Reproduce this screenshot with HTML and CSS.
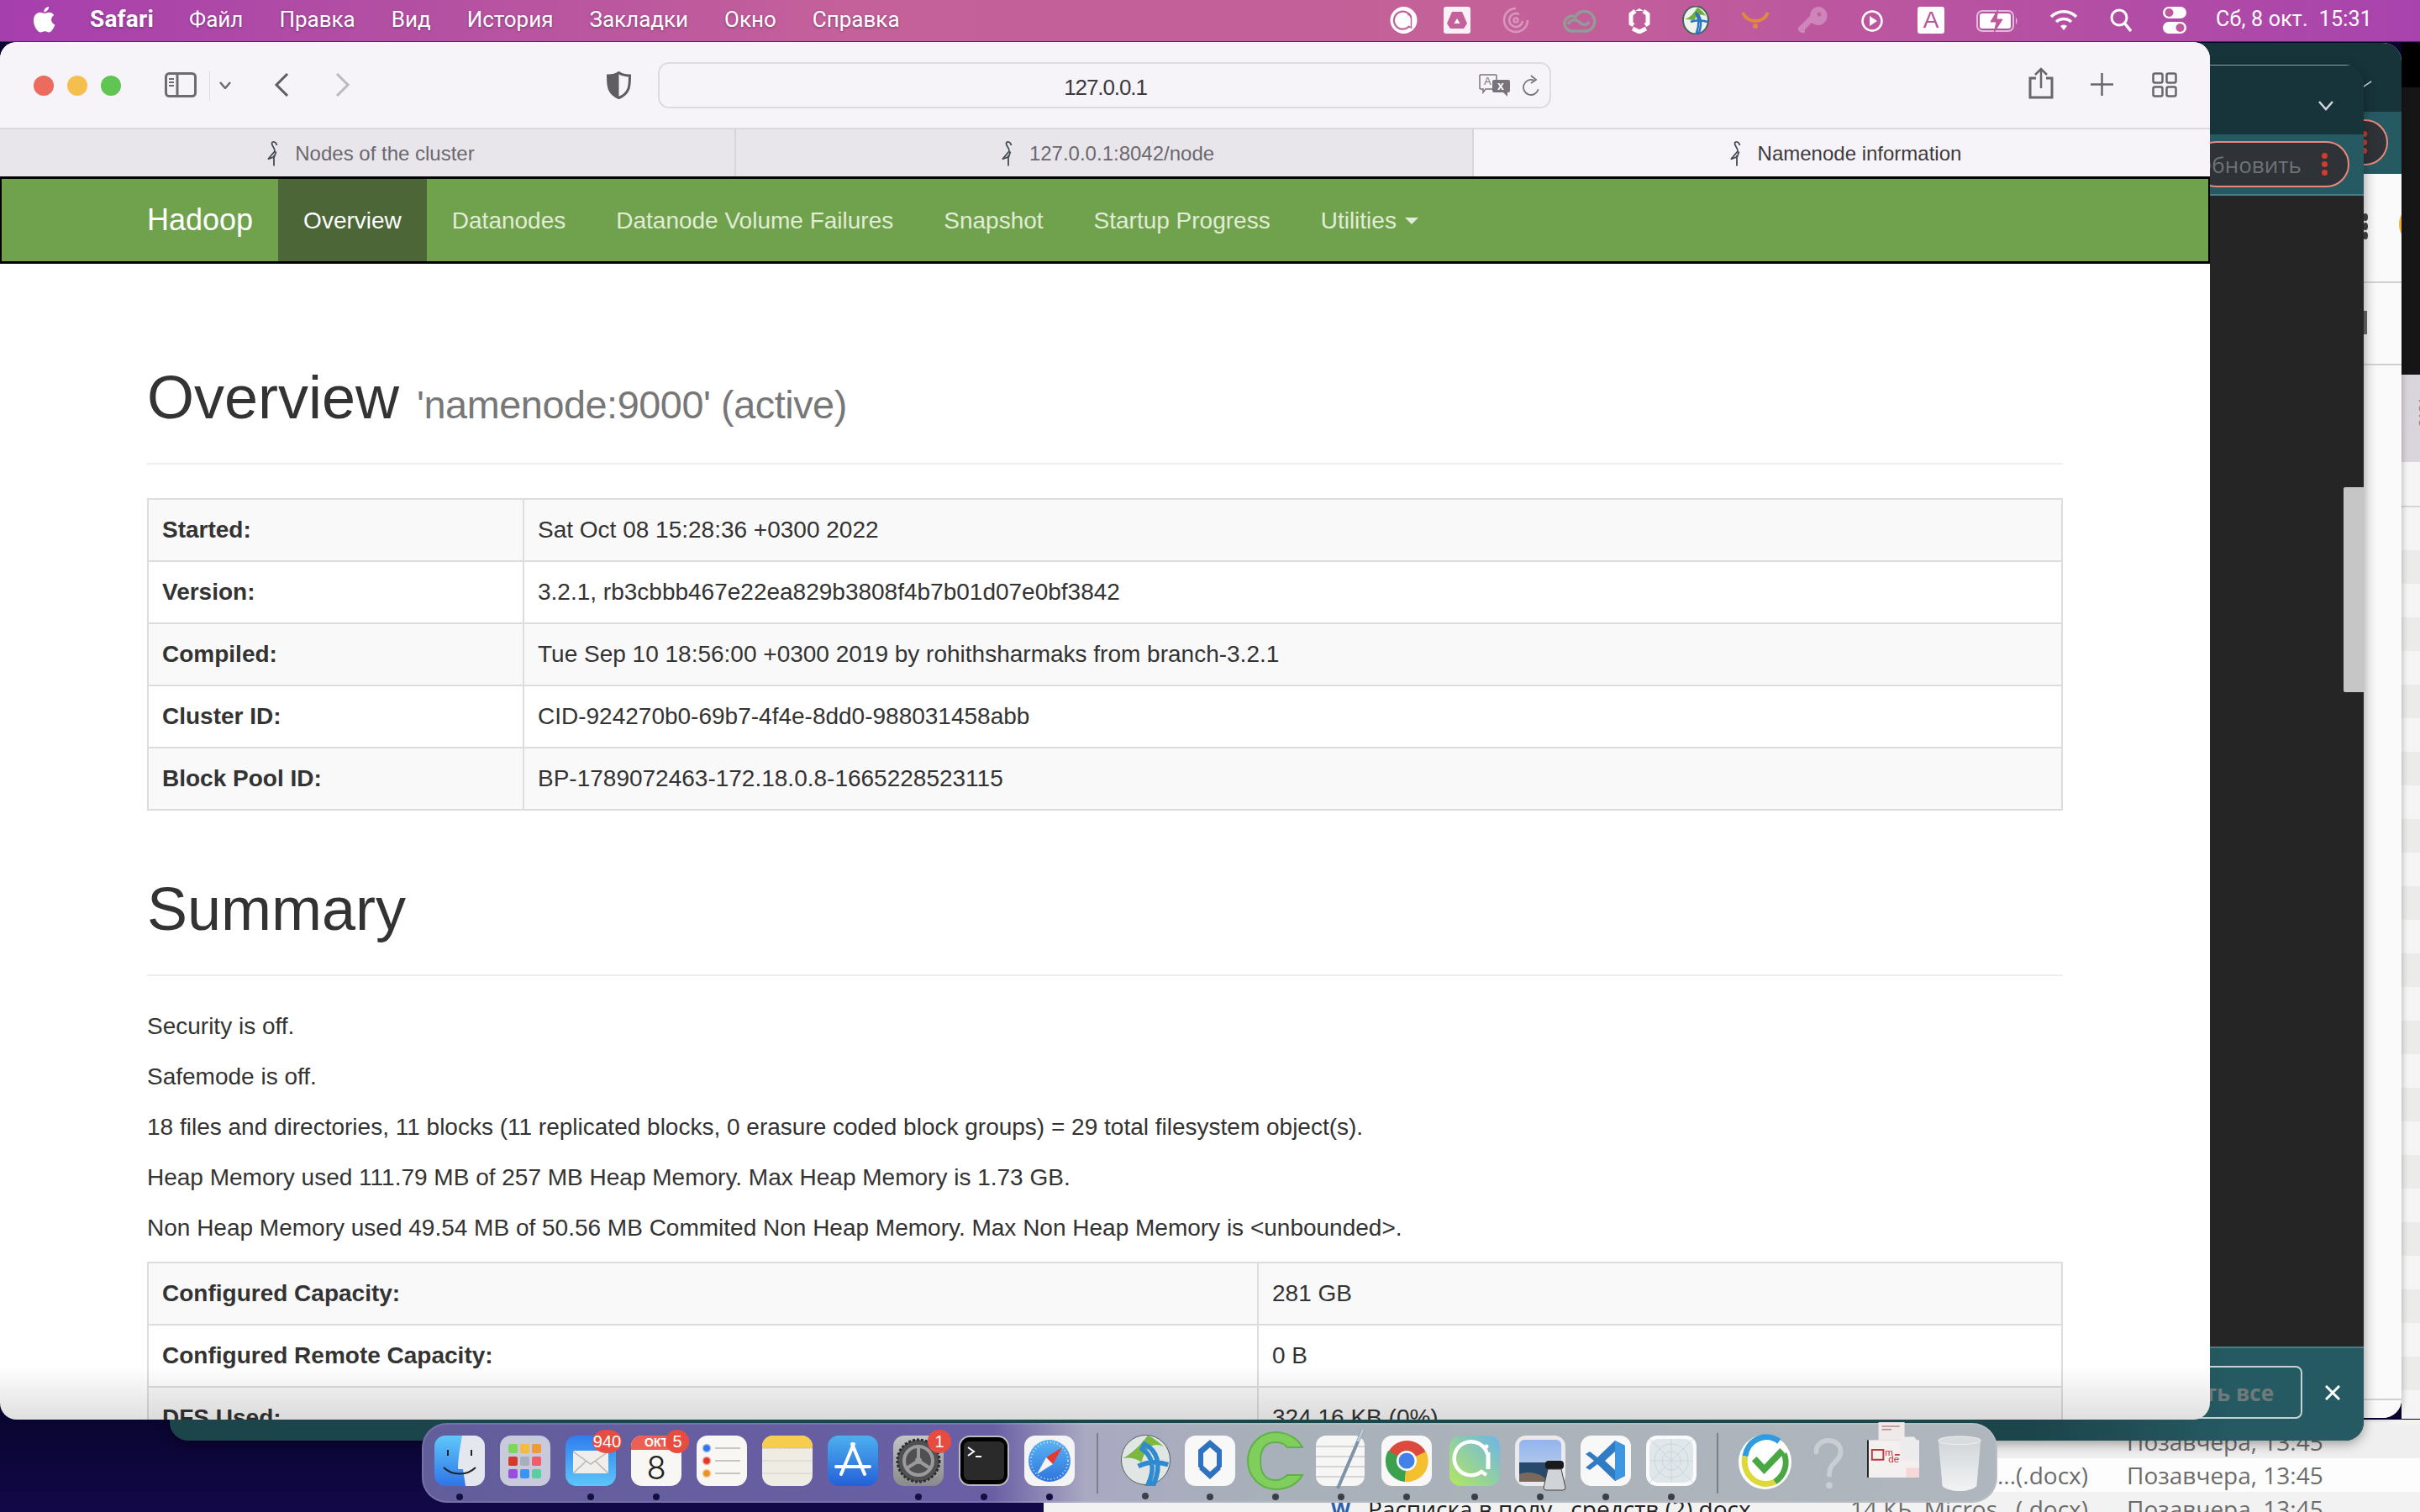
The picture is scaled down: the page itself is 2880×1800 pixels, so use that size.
FILE: index.html
```html
<!DOCTYPE html>
<html lang="ru">
<head>
<meta charset="utf-8">
<title>Namenode information</title>
<link rel="stylesheet" href="styles.css">
</head>
<body>
<svg class="defs" width="0" height="0">
  <symbol id="bird" viewBox="0 0 16 32"><path d="M12.500 7C11.500 2.500 6.500 1.500 6.500 5c0 3 4 5 3.500 9L2 23.500l7.500-3 2-6M9 19v12.500" fill="none" stroke="#414c54" stroke-width="1.800"/></symbol>
</svg>
<div class="desktop">

  <div class="win win-finder">
    <div class="finder-row f1"><span class="f-name">ент</span><span class="f-date">Позавчера, 13:45</span></div>
    <div class="finder-row f2"><span class="f-name">...(.docx)</span><span class="f-date">Позавчера, 13:45</span></div>
    <div class="finder-row f3"><span class="f-w">W</span><span class="f-main">Расписка в полу...средств (2).docx</span><span class="f-size">14 КБ</span><span class="f-name">Micros...(.docx)</span><span class="f-date">Позавчера, 13:45</span></div>
  </div>

  <div class="win win-far">
    <div class="far-top"></div>
    <div class="far-dark"></div>
    <div class="far-tab"><span class="far-rot">Iolo</span></div>
    <div class="far-chev"></div>
    <div class="far-rows"></div>
  </div>

  <div class="win win-back">
    <div class="back-head"><svg class="back-chev" viewBox="0 0 14 10"><path d="M1 9l12-8" fill="none" stroke="#cfd8da" stroke-width="2"/></svg></div>
    <div class="back-strip"><div class="back-pill"><i class="rd"></i><i class="rd"></i><i class="rd"></i></div></div>
    <div class="back-body">
      <div class="back-dots"><i></i><i></i><i></i></div>
      <div class="back-orange"></div>
      <div class="back-line l1"></div>
      <div class="back-grey"></div>
      <div class="back-line l2"></div>
      <div class="back-line l3"></div>
    </div>
  </div>

  <div class="win win-front">
    <div class="front-head"><svg class="front-chev" viewBox="0 0 18 12"><path d="M1 1l8 9 8-9" fill="none" stroke="#cfd8da" stroke-width="2.500"/></svg></div>
    <div class="front-strip">
      <div class="pill"><span class="pill-text">Обновить</span><span class="pill-dots"><i class="rd"></i><i class="rd"></i><i class="rd"></i></span></div>
    </div>
    <div class="front-body"><div class="front-scroll"></div></div>
    <div class="front-foot">
      <div class="ghost">Закрыть все</div>
      <svg class="close-x" viewBox="0 0 18 18"><path d="M1 1l16 16M17 1L1 17" stroke="#fff" stroke-width="3"/></svg>
    </div>
  </div>

  <header class="menubar">
    <svg class="apple" viewBox="0 0 26 31"><path d="M18 0c.3 3-2.600 6.500-5.800 6.300C12 3.200 15 .3 18 0zM12.800 8c1.500 0 3-1.300 5.500-1.300 2.400 0 4.600 1.200 6 3.300-4.800 2.800-4 9.500 1.200 11.500-1.300 3.400-4 9-7.200 9-1.700 0-2.700-1.200-4.800-1.200-2.200 0-3.300 1.200-5 1.200C4.500 30.500 0 23 0 16.500 0 10.200 4 6.800 7.700 6.800c2.200 0 3.900 1.200 5.100 1.200z" fill="#fff"/></svg>
    <nav class="menus">
      <span class="menu-app">Safari</span><span>Файл</span><span>Правка</span><span>Вид</span><span>История</span><span>Закладки</span><span>Окно</span><span>Справка</span>
    </nav>
    <div class="status">
      <svg class="st s1" viewBox="0 0 32 32"><circle cx="16" cy="16" r="16" fill="#fff"/><path d="M22 24a10.500 10.500 0 1 1 3-11" fill="none" stroke="#c4609a" stroke-width="2.200"/><path d="M25 13v12l-4-2" fill="none" stroke="#c4609a" stroke-width="1.500"/><circle cx="22" cy="9" r="1.500" fill="#c4609a"/></svg>
      <svg class="st s2" viewBox="0 0 32 32"><rect width="32" height="32" rx="3" fill="#f8f2f6"/><path d="M10 6h12l6 14-4 6H8l-4-6z" fill="#c4609a"/><path d="M16 14l3.500 6h-7z" fill="#fff"/></svg>
      <svg class="st s3" viewBox="0 0 32 32"><g fill="none" stroke="#fff" stroke-opacity=".35" stroke-width="2.500"><path d="M16 2A14 14 0 1 0 30 16"/><path d="M20 9a8 8 0 1 0 4 8"/><circle cx="16" cy="16" r="2.500"/></g></svg>
      <svg class="st s4" viewBox="0 0 40 32"><g fill="none" stroke="#949a96" stroke-width="3.500"><path d="M12 29a9 9 0 1 1 3-17 12 12 0 1 1 14 17z"/><path d="M6 21c3-6 9-7 13-3s9 5 12 0"/></g></svg>
      <svg class="st s5" viewBox="0 0 26 32"><g fill="none" stroke="#fff" stroke-width="5"><path d="M8 5L3 9v11l3 2M18 5l5 4v11l-3 2"/><path d="M5 26l8 4 8-4"/></g><path d="M13 2l5 3-5 0-5 0z" fill="#fff"/></svg>
      <svg class="st s6" viewBox="0 0 32 34"><ellipse cx="16" cy="17" rx="15" ry="16.500" fill="#eef3ee" stroke="#44645a" stroke-width="2"/><path d="M3 16C10 14 14 8 18 2c4 2 8 6 10 10-6-4-12 0-14 6-4-2-8-2-11-2z" fill="#6fae3c"/><path d="M16 8c6 4 8 12 4 24h-3c3-8 4-16-1-24zM10 19c6-2 14-2 20 0" fill="none" stroke="#2c74c0" stroke-width="2.500"/></svg>
      <svg class="st s7" viewBox="0 0 34 21"><path d="M2 2c3 7 9 10 15 10S29 9 32 2" fill="none" stroke="#e08a3c" stroke-width="4"/><circle cx="17" cy="18" r="3" fill="#e08a3c"/></svg>
      <svg class="st s8" viewBox="0 0 35 32"><path d="M23 0a11 11 0 1 1-7 19L8 27v4H3l-3-3v-3l14-14A11 11 0 0 1 23 0z" fill="#fff" fill-opacity=".28"/><circle cx="25" cy="9" r="2.500" fill="#c4609a"/></svg>
      <svg class="st s9" viewBox="0 0 26 26"><circle cx="13" cy="13" r="11.500" fill="none" stroke="#fff" stroke-width="2.500"/><path d="M10 7l9 6-9 6z" fill="#fff"/></svg>
      <div class="st s10">A</div>
      <svg class="st s11" viewBox="0 0 50 30"><rect x="1" y="3" width="43" height="24" rx="6" fill="none" stroke="#fff" stroke-opacity=".6" stroke-width="2"/><rect x="4" y="6" width="37" height="18" rx="3" fill="#fff"/><path d="M26 1l-9 15h7l-3 13 10-16h-7z" fill="#c0589c" stroke="#c0589c" stroke-width="1"/><path d="M47 11c2 1 2 7 0 8z" fill="#fff" fill-opacity=".6"/></svg>
      <svg class="st s12" viewBox="0 0 34 26"><g fill="none" stroke="#fff" stroke-width="3.500"><path d="M2 9a21 21 0 0 1 30 0"/><path d="M8 15a13 13 0 0 1 18 0"/></g><path d="M13 20a6 6 0 0 1 8 0l-4 5z" fill="#fff"/></svg>
      <svg class="st s13" viewBox="0 0 26 28"><circle cx="11" cy="11" r="9" fill="none" stroke="#fff" stroke-width="3"/><path d="M17 17l8 10" stroke="#fff" stroke-width="3.500"/></svg>
      <svg class="st s14" viewBox="0 0 30 34"><rect x="1" y="1" width="28" height="14" rx="7" fill="#fff"/><circle cx="8.500" cy="8" r="5" fill="#c0589c"/><rect x="1" y="19" width="28" height="14" rx="7" fill="#fff"/><circle cx="21.500" cy="26" r="5" fill="#c0589c"/></svg>
      <span class="clock">Сб, 8 окт.&nbsp;&nbsp;15:31</span>
    </div>
  </header>

  <main class="win safari">
    <div class="toolbar">
      <div class="lights"><i class="red"></i><i class="yellow"></i><i class="green"></i></div>
      <svg class="tb sidebar" viewBox="0 0 38 30"><rect x="1.500" y="1.500" width="35" height="27" rx="4" fill="none" stroke="#6d6a70" stroke-width="3"/><path d="M15 2v26" stroke="#6d6a70" stroke-width="3"/><path d="M5 8h6M5 12h6M5 16h6" stroke="#6d6a70" stroke-width="2"/></svg>
      <span class="tb-sep"></span>
      <svg class="tb caret" viewBox="0 0 14 9"><path d="M1 1l6 7 6-7" fill="none" stroke="#6d6a70" stroke-width="2.500"/></svg>
      <svg class="tb back" viewBox="0 0 18 28"><path d="M16 1L3 14l13 13" fill="none" stroke="#5f5c62" stroke-width="3"/></svg>
      <svg class="tb forward" viewBox="0 0 18 28"><path d="M2 1l13 13L2 27" fill="none" stroke="#bdbabf" stroke-width="3"/></svg>
      <svg class="tb shield" viewBox="0 0 29 33"><path d="M14.500 1.500C18 4 23 5 27.500 5c0 12 0 21-13 26.500C1.500 26 1.500 17 1.500 5 6 5 11 4 14.500 1.500z" fill="none" stroke="#5f5c62" stroke-width="3"/><path d="M14.500 1.500C11 4 6 5 1.500 5c0 12 0 21 13 26.500z" fill="#5f5c62"/></svg>
      <div class="urlbar">
        <span class="url">127.0.0.1</span>
        <svg class="translate" viewBox="0 0 37 27"><path d="M2 1h18a1 1 0 0 1 1 1v15a1 1 0 0 1-1 1H8l-3 4v-4H2a1 1 0 0 1-1-1V2a1 1 0 0 1 1-1z" fill="#f6f3f9" stroke="#77747a" stroke-width="1.500"/><rect x="16" y="7" width="21" height="15" rx="2" fill="#77747a"/><path d="M29 22l5 5v-5z" fill="#77747a"/><text x="6" y="13" class="tr-a">A</text><text x="22" y="19" class="tr-x">x</text></svg>
        <svg class="reload" viewBox="0 0 22 25"><path d="M12 6a9 9 0 1 0 8 9" fill="none" stroke="#77747a" stroke-width="1.800" transform="rotate(15 11 15)"/><path d="M11 1l6 5-6 4" fill="none" stroke="#77747a" stroke-width="1.800"/></svg>
      </div>
      <svg class="tb share" viewBox="0 0 30 38"><path d="M9 13H2v23h26V13h-7" fill="none" stroke="#68656b" stroke-width="3"/><path d="M15 25V2M8 9l7-7 7 7" fill="none" stroke="#68656b" stroke-width="2.500"/></svg>
      <svg class="tb plus" viewBox="0 0 27 27"><path d="M13.500 0v27M0 13.500h27" stroke="#68656b" stroke-width="2.500"/></svg>
      <svg class="tb grid" viewBox="0 0 30 30"><g fill="none" stroke="#68656b" stroke-width="2.500"><rect x="1.500" y="1.500" width="11" height="11" rx="2"/><rect x="17.500" y="1.500" width="11" height="11" rx="2"/><rect x="1.500" y="17.500" width="11" height="11" rx="2"/><rect x="17.500" y="17.500" width="11" height="11" rx="2"/></g></svg>
    </div>
    <div class="tabs">
      <div class="tab"><svg class="bird"><use href="#bird"/></svg><span>Nodes of the cluster</span></div>
      <div class="tab"><svg class="bird"><use href="#bird"/></svg><span>127.0.0.1:8042/node</span></div>
      <div class="tab current"><svg class="bird"><use href="#bird"/></svg><span>Namenode information</span></div>
    </div>
    <nav class="navbar">
      <div class="nav-inner">
        <a class="brand">Hadoop</a>
        <a class="nav-link active">Overview</a>
        <a class="nav-link">Datanodes</a>
        <a class="nav-link">Datanode Volume Failures</a>
        <a class="nav-link">Snapshot</a>
        <a class="nav-link">Startup Progress</a>
        <a class="nav-link">Utilities <b class="nav-caret"></b></a>
      </div>
    </nav>
    <section class="container">
      <div class="page-header first"><h1>Overview <small>'namenode:9000' (active)</small></h1></div>
      <table class="table t1">
        <tr><th>Started:</th><td>Sat Oct 08 15:28:36 +0300 2022</td></tr>
        <tr><th>Version:</th><td>3.2.1, rb3cbbb467e22ea829b3808f4b7b01d07e0bf3842</td></tr>
        <tr><th>Compiled:</th><td>Tue Sep 10 18:56:00 +0300 2019 by rohithsharmaks from branch-3.2.1</td></tr>
        <tr><th>Cluster ID:</th><td>CID-924270b0-69b7-4f4e-8dd0-988031458abb</td></tr>
        <tr><th>Block Pool ID:</th><td>BP-1789072463-172.18.0.8-1665228523115</td></tr>
      </table>
      <div class="page-header"><h1>Summary</h1></div>
      <p>Security is off.</p>
      <p>Safemode is off.</p>
      <p>18 files and directories, 11 blocks (11 replicated blocks, 0 erasure coded block groups) = 29 total filesystem object(s).</p>
      <p>Heap Memory used 111.79 MB of 257 MB Heap Memory. Max Heap Memory is 1.73 GB.</p>
      <p>Non Heap Memory used 49.54 MB of 50.56 MB Commited Non Heap Memory. Max Non Heap Memory is &lt;unbounded&gt;.</p>
      <table class="table t2">
        <tr><th>Configured Capacity:</th><td>281 GB</td></tr>
        <tr><th>Configured Remote Capacity:</th><td>0 B</td></tr>
        <tr><th>DFS Used:</th><td>324.16 KB (0%)</td></tr>
      </table>
    </section>
    <div class="dock-shade"></div>
  </main>

  <footer class="dock">
    <div class="app dot"><svg viewBox="0 0 60 60"><rect width="60" height="60" rx="13" fill="url(#fa)"/><path d="M33 0h14a13 13 0 0 1 13 13v34a13 13 0 0 1-13 13H37c-1-7-2-13-3-20h-6c0-14 3-28 5-40z" fill="#e4e8ee"/><path d="M16 17v7M44 17v7" stroke="#222" stroke-width="2"/><path d="M11 38c10 10 28 10 38 0" fill="none" stroke="#222" stroke-width="2"/><defs><linearGradient id="fa" x1="0" y1="0" x2="0" y2="1"><stop offset="0" stop-color="#5fc8fa"/><stop offset="1" stop-color="#2f74e8"/></linearGradient></defs></svg></div>
    <div class="app"><svg viewBox="0 0 60 60"><rect width="60" height="60" rx="13" fill="#c9c9dc"/><g><rect x="10" y="10" width="11" height="11" rx="2" fill="#7cd65c"/><rect x="24" y="10" width="11" height="11" rx="2" fill="#f4bc3c"/><rect x="38" y="10" width="11" height="11" rx="2" fill="#ee9a3a"/><rect x="10" y="25" width="11" height="11" rx="2" fill="#d6382c"/><rect x="24" y="25" width="11" height="11" rx="2" fill="#a6b0ba"/><rect x="38" y="25" width="11" height="11" rx="2" fill="#ef5c6c"/><rect x="10" y="40" width="11" height="11" rx="2" fill="#9a4ee0"/><rect x="24" y="40" width="11" height="11" rx="2" fill="#3a94f4"/><rect x="38" y="40" width="11" height="11" rx="2" fill="#58cfa0"/></g></svg></div>
    <div class="app dot"><svg viewBox="0 0 60 60"><rect width="60" height="60" rx="13" fill="url(#ma)"/><rect x="9" y="18" width="42" height="27" rx="2" fill="#f0eeea"/><path d="M9 19l21 15 21-15M9 45l16-15M51 45L35 30" fill="none" stroke="#b8b6b2" stroke-width="1.500"/><defs><linearGradient id="ma" x1="0" y1="0" x2="0" y2="1"><stop offset="0" stop-color="#2f7ef0"/><stop offset="1" stop-color="#5cc6f8"/></linearGradient></defs></svg><span class="badge b-mail">940</span></div>
    <div class="app dot cal"><div class="cal-top">ОКТ.</div><div class="cal-day">8</div><span class="badge b-cal">5</span></div>
    <div class="app"><svg viewBox="0 0 60 60"><rect width="60" height="60" rx="13" fill="#f8f7f4"/><circle cx="12" cy="15" r="4.500" fill="#2f74e8" stroke="#9dbcf2" stroke-width="1.500"/><circle cx="12" cy="30" r="4.500" fill="#e0392c" stroke="#f2a8a0" stroke-width="1.500"/><circle cx="12" cy="45" r="4.500" fill="#ea9228" stroke="#f6cc94" stroke-width="1.500"/><path d="M22 15h30M22 30h30M22 45h30" stroke="#b8b6b4" stroke-width="1.500"/></svg></div>
    <div class="app"><svg viewBox="0 0 60 60"><rect width="60" height="60" rx="13" fill="#efece4"/><path d="M0 15V13A13 13 0 0 1 13 0h34a13 13 0 0 1 13 13v2z" fill="#f6cd4f"/><path d="M0 15h60" stroke="#c9c5ba" stroke-dasharray="1 1" stroke-width="2"/><path d="M0 30h60M0 45h60" stroke="#dcd9d0" stroke-width="1.500"/></svg></div>
    <div class="app"><svg viewBox="0 0 60 60"><rect width="60" height="60" rx="13" fill="url(#as)"/><g stroke="#fff" stroke-width="4" stroke-linecap="round" fill="none"><path d="M31 10L16 46M29 10l15 36"/><path d="M10 37h40"/></g><defs><linearGradient id="as" x1="0" y1="0" x2="0" y2="1"><stop offset="0" stop-color="#4cb0f0"/><stop offset="1" stop-color="#2460d8"/></linearGradient></defs></svg></div>
    <div class="app dot"><svg viewBox="0 0 60 60"><rect width="60" height="60" rx="13" fill="url(#se)"/><circle cx="30" cy="30" r="25" fill="#505052" stroke="#2c2c2e" stroke-width="3" stroke-dasharray="3 2"/><circle cx="30" cy="30" r="17" fill="none" stroke="#9a9a9c" stroke-width="4"/><circle cx="30" cy="30" r="4" fill="#9a9a9c"/><path d="M30 30V14M30 30L16 39M30 30l14 9" stroke="#9a9a9c" stroke-width="4"/><defs><linearGradient id="se" x1="0" y1="0" x2="0" y2="1"><stop offset="0" stop-color="#c2c4c6"/><stop offset="1" stop-color="#8a8a8a"/></linearGradient></defs></svg><span class="badge b-set">1</span></div>
    <div class="app dot"><svg viewBox="0 0 60 60"><rect width="60" height="60" rx="13" fill="#b7bcc0"/><rect x="2" y="2" width="56" height="56" rx="11" fill="#000"/><rect x="6" y="7" width="48" height="46" rx="6" fill="#2a2a2a"/><path d="M11 14l7 5-7 5" fill="none" stroke="#fff" stroke-width="2"/><path d="M20 25h7" stroke="#fff" stroke-width="2"/></svg></div>
    <div class="app dot"><svg viewBox="0 0 60 60"><rect width="60" height="60" rx="13" fill="#f4f4f4"/><circle cx="30" cy="30" r="25" fill="url(#sa)"/><circle cx="30" cy="30" r="22" fill="none" stroke="#cfe4fa" stroke-width="2" stroke-dasharray="1 3"/><path d="M45 14L26 26l8 8z" fill="#e8392c"/><path d="M15 46l19-12-8-8z" fill="#f4f4f4"/><defs><linearGradient id="sa" x1="0" y1="0" x2="0" y2="1"><stop offset="0" stop-color="#5ab4f4"/><stop offset="1" stop-color="#2e74dc"/></linearGradient></defs></svg></div>
    <span class="dock-sep"></span>
    <div class="app dot wide"><svg viewBox="0 0 63 64"><ellipse cx="31.500" cy="32" rx="31" ry="31.500" fill="#dfe6e4" stroke="#4c5a56"/><path d="M2 30C14 24 24 14 34 1c6 2 14 8 20 14-12-6-22 0-28 20C20 30 10 28 2 30z" fill="#7cb83e"/><path d="M30 12c16 8 22 26 12 50h-7c8-18 6-34-8-44zM22 40c12-6 26-6 38-2" fill="none" stroke="#2f8ad0" stroke-width="6"/></svg></div>
    <div class="app dot"><svg viewBox="0 0 60 60"><rect width="60" height="60" rx="13" fill="#f8f8f8"/><path d="M30 5l14 12v20l-6 6V21l-8-7-8 7v22l-6-6V17z" fill="#2f72c0"/><path d="M17 40l13 12 13-12-5-4-8 7-8-7z" fill="#2f72c0"/></svg></div>
    <div class="app dot tall"><svg viewBox="0 0 70 72"><path d="M35 2a33 34 0 1 0 0 68c14 0 26-6 32-17H49c-4 4-9 6-14 6-13 0-18-9-18-23s6-22 18-22c6 0 11 2 14 6h18C61 9 49 2 35 2z" fill="#80cf5c" stroke="#5fb24a" stroke-width="2"/></svg></div>
    <div class="app dot"><svg viewBox="0 0 60 72"><rect y="7" width="58" height="60" rx="12" fill="#f6f6f4"/><path d="M0 20h58M0 32h58M0 44h58M0 56h58" stroke="#c9c9d0" stroke-width="1.500"/><path d="M56 0L26 70" stroke="#7e93a8" stroke-width="4"/><path d="M56 0l-6 14" stroke="#b8ccdc" stroke-width="3"/></svg></div>
    <div class="app dot"><svg viewBox="0 0 60 60"><rect width="60" height="60" rx="13" fill="#f8f8f8"/><path d="M30 30L8 20A25 25 0 0 1 53 20z" fill="#db4a3c"/><path d="M30 30L8 18a25 25 0 0 0 20 37z" fill="#3aa24e"/><path d="M30 30l23-11a25 25 0 0 1-25 36z" fill="#f4c030"/><circle cx="30" cy="30" r="12" fill="#fff"/><circle cx="30" cy="30" r="9.500" fill="#4480ea"/></svg></div>
    <div class="app dot q-app"><svg viewBox="0 0 60 60"><rect width="60" height="60" rx="13" fill="url(#q)"/><path d="M47 49l-6-4A20 20 0 1 1 48 24" fill="none" stroke="#fff" stroke-width="4.500" transform="translate(-3 -2)"/><path d="M46 20v20" stroke="#fff" stroke-width="5"/><circle cx="44" cy="13" r="2.500" fill="#fff"/><defs><linearGradient id="q" x1="1" y1="0" x2="0" y2="1"><stop offset="0" stop-color="#6cb4ec"/><stop offset="1" stop-color="#b4e85c"/></linearGradient></defs></svg></div>
    <div class="app dot"><svg viewBox="0 0 60 66"><rect width="60" height="60" rx="13" fill="#eaeaee"/><rect x="5" y="5" width="50" height="50" rx="6" fill="url(#pv)"/><path d="M5 32h50v23H5z" fill="#274a6c"/><path d="M5 46c12-4 26-2 34 9H5z" fill="#776a5c"/><rect x="36" y="30" width="22" height="10" rx="4" fill="#1a1a1a"/><path d="M39 40h16l5 22a3 3 0 0 1-3 3H37a3 3 0 0 1-3-3z" fill="#d0d4d8" stroke="#444"/><defs><linearGradient id="pv" x1="0" y1="0" x2="0" y2="1"><stop offset="0" stop-color="#94b4ec"/><stop offset="1" stop-color="#c4d4ec"/></linearGradient></defs></svg></div>
    <div class="app dot"><svg viewBox="0 0 60 60"><rect width="60" height="60" rx="13" fill="#f8f8f8"/><path d="M41 6l12 6v36l-12 6L20 34l-9 7-5-3 10-8-10-8 5-3 9 7z" fill="#2f7bc4"/><path d="M41 19L29 30l12 11z" fill="#f8f8f8"/><path d="M41 6l12 6v36l-12 6z" fill="#3f96e0"/></svg></div>
    <div class="app dot"><svg viewBox="0 0 60 60"><rect width="60" height="60" rx="13" fill="#fafafa"/><rect x="4" y="4" width="52" height="52" rx="10" fill="#dfe7eb"/><g fill="none" stroke="#cbd5da"><circle cx="30" cy="30" r="20"/><circle cx="30" cy="30" r="11"/><path d="M4 4l52 52M56 4L4 56M30 4v52M4 30h52"/></g></svg></div>
    <span class="dock-sep sep2"></span>
    <div class="app wide after"><svg viewBox="0 0 66 68"><ellipse cx="33" cy="34" rx="32" ry="33" fill="#fff"/><path d="M50 9A26 27 0 0 0 9 27" fill="none" stroke="#2f9ce0" stroke-width="7"/><path d="M9 27a26 27 0 0 0 36 31" fill="none" stroke="#dfd83a" stroke-width="7"/><path d="M45 58c12-8 16-22 11-34" fill="none" stroke="#4aa844" stroke-width="7"/><path d="M20 30l12 13 22-23" fill="none" stroke="#4aa844" stroke-width="8"/></svg></div>
    <div class="app qm"><svg viewBox="0 0 40 64"><path d="M5 17C5 8 12 3 20 3s15 5 15 14c0 12-14 12-14 28" fill="none" stroke="#c8ced2" stroke-width="6" stroke-linecap="round"/><circle cx="21" cy="58" r="4" fill="#c8ced2"/></svg></div>
    <div class="app docs"><svg viewBox="0 0 64 70"><rect x="14" y="0" width="32" height="22" fill="#efe9e9"/><path d="M18 5h22M18 9h12" stroke="#b4898a" stroke-width="1.500"/><rect x="0" y="22" width="64" height="46" fill="#f4f0f0"/><rect x="0" y="22" width="2" height="46" fill="#222"/><path d="M6 34h14v12H6zM34 40h14" fill="none" stroke="#c0383c" stroke-width="2"/><text x="22" y="41" class="doc-t">m</text><text x="26" y="49" class="doc-t">de</text><rect x="48" y="56" width="16" height="12" fill="#f6d8d8"/><path d="M40 18h18l6 8v22H40z" fill="#ececec"/></svg></div>
    <div class="app trash"><svg viewBox="0 0 54 68"><path d="M1 6c10-6 42-6 52 0l-5 56c-8 8-34 8-42 0z" fill="url(#tr)"/><ellipse cx="27" cy="6" rx="26" ry="5" fill="#d8dcde" stroke="#eef0f1"/><defs><linearGradient id="tr" x1="0" y1="0" x2="0" y2="1"><stop offset="0" stop-color="#cfd4d7"/><stop offset="1" stop-color="#f2f3f4"/></linearGradient></defs></svg></div>
  </footer>
</div>
</body>
</html>
```
FILE: styles.css
```css
* { box-sizing: border-box; }
html, body { margin: 0; padding: 0; }
body { width: 2880px; height: 1800px; overflow: hidden; font-family: "Liberation Sans", Arial, sans-serif; }
.defs { position: absolute; }
.desktop { position: relative; width: 2880px; height: 1800px; overflow: hidden; background: linear-gradient(180deg, #0a0530 1690px, #120848 1800px); }
.win { position: absolute; overflow: hidden; }

/* menu bar */
.menubar { position: absolute; left: 0; top: 0; width: 2880px; height: 49px; display: flex; align-items: center; padding: 0 0 3px 40px; color: #fff; background: linear-gradient(90deg, #a63fae 0, #b450a2 500px, #c4609a 1000px, #c46199 1800px, #b954a0 2300px, #a843ae 2880px); box-shadow: 0 1px 0 #4a2a60; font-family: Roboto, "Liberation Sans", sans-serif; font-size: 26px; }
.apple { width: 26px; height: 31px; flex: none; }
.menus { display: flex; gap: 43px; margin-left: 41px; text-shadow: 0 1px 3px rgba(60, 0, 60, .4); }
.menu-app { font-weight: 700; font-size: 28px; line-height: 30px; letter-spacing: .2px; margin-right: -1px; }
.status { position: absolute; inset: 0; pointer-events: none; }
.st { position: absolute; }
.s1 { left: 1654px; top: 8px; width: 33px; height: 32px; }
.s2 { left: 1718px; top: 8px; width: 32px; height: 32px; }
.s3 { left: 1788px; top: 8px; width: 32px; height: 32px; }
.s4 { left: 1860px; top: 8px; width: 40px; height: 32px; }
.s5 { left: 1938px; top: 8px; width: 26px; height: 32px; }
.s6 { left: 2002px; top: 7px; width: 32px; height: 34px; }
.s7 { left: 2072px; top: 13px; width: 34px; height: 21px; }
.s8 { left: 2140px; top: 8px; width: 35px; height: 32px; }
.s9 { left: 2215px; top: 12px; width: 26px; height: 26px; }
.s10 { left: 2282px; top: 8px; width: 32px; height: 32px; background: #fff; border-radius: 3px; color: #b9559c; font: 28px/32px "Liberation Sans", sans-serif; text-align: center; }
.s11 { left: 2352px; top: 10px; width: 50px; height: 30px; }
.s12 { left: 2439px; top: 11px; width: 34px; height: 26px; }
.s13 { left: 2511px; top: 10px; width: 26px; height: 28px; }
.s14 { left: 2573px; top: 7px; width: 30px; height: 34px; }
.clock { position: absolute; left: 2637px; top: 7px; line-height: 32px; font-size: 25px; white-space: pre; letter-spacing: .2px; }

/* behind windows */
.win-finder { left: 1242px; top: 1690px; width: 1638px; height: 110px; background: #f1f2f1; color: #6c6c6c; font: 28px/40px "Open Sans", sans-serif; }
.finder-row { position: absolute; left: 0; right: 0; height: 40px; display: flex; }
.f1 { top: 6px; background: #efefef; }
.f2 { top: 46px; background: #fdfdfd; }
.f3 { top: 86px; background: #f1f2f1; }
.f-date { position: absolute; left: 1289px; white-space: nowrap; }
.f-name { position: absolute; left: 1040px; width: 203px; text-align: right; white-space: nowrap; overflow: hidden; }
.f1 .f-name { left: 1010px; width: 100px; }
.f-main { position: absolute; left: 386px; color: #222; white-space: nowrap; }
.f-size { position: absolute; left: 960px; white-space: nowrap; }
.f-w { position: absolute; left: 342px; top: 0; width: 26px; color: #2e5fae; font-size: 24px; font-weight: 700; }

.win-far { left: 2858px; top: 51px; width: 22px; height: 1638px; background: #f5f5f5; }
.far-top { height: 53px; background: #000; }
.far-dark { height: 342px; background: #161616; }
.far-tab { height: 104px; background: #d9d5dc; position: relative; }
.far-rot { position: absolute; left: 10px; top: 33px; font-size: 22px; color: #7f7c80; transform: rotate(90deg); transform-origin: 50% 50%; }
.far-chev { height: 105px; background: linear-gradient(180deg, #f5f5f5 52px, #d6d6d6 52px, #d6d6d6 54px, #f5f5f5 54px); }
.far-rows { height: 1200px; background: repeating-linear-gradient(180deg, #ebecea 0, #ebecea 40px, #f5f5f5 40px, #f5f5f5 80px); }

.win-back { left: 2400px; top: 51px; width: 458px; height: 1637px; border-radius: 22px; background: #f8f8f8; box-shadow: 0 0 8px rgba(0, 0, 0, .3); }
.back-head { height: 82px; background: #17343b; position: relative; }
.back-chev { position: absolute; left: 412px; top: 44px; width: 11px; height: 10px; }
.back-strip { height: 74px; background: #255a62; position: relative; }
.back-pill { position: absolute; left: 292px; top: 9px; width: 150px; height: 55px; border-radius: 28px; background: #2f3338; border: 2px solid #e8897a; display: flex; flex-direction: column; gap: 3px; align-items: flex-end; justify-content: center; padding-right: 23px; }
.rd { display: block; width: 7px; height: 7px; border-radius: 50%; background: #d03c2e; }
.back-body { position: relative; height: 1481px; background: linear-gradient(90deg, #eee 410px, #fafafa 430px); }
.back-dots { position: absolute; left: 412px; top: 47px; display: flex; flex-direction: column; gap: 2px; }
.back-dots i { display: block; width: 6px; height: 9px; border-radius: 50%; background: #444; }
.back-orange { position: absolute; left: 455px; top: 47px; width: 12px; height: 26px; border-radius: 50%; background: #eeae38; }
.back-line { position: absolute; left: 400px; width: 58px; height: 2px; background: #d0d0d4; }
.l1 { top: 128px; }
.l2 { top: 226px; }
.l3 { top: 1458px; }
.back-grey { position: absolute; left: 412px; top: 163px; width: 5px; height: 28px; background: #666; }

.win-front { left: 202px; top: 77px; width: 2611px; height: 1638px; border-radius: 22px; background: #252525; box-shadow: 0 4px 14px rgba(0, 0, 0, .35); display: flex; flex-direction: column; }
.front-head { height: 83px; background: #17343b; position: relative; border-top: 1px solid #8ea6aa; flex: none; }
.front-chev { position: absolute; right: 36px; top: 42px; width: 18px; height: 12px; }
.front-strip { height: 73px; background: #255a62; border-bottom: 2px solid #4a7c85; position: relative; flex: none; }
.pill { position: absolute; right: 17px; top: 8px; width: 186px; height: 55px; border-radius: 28px; background: #2f3338; border: 2px solid #e8897a; display: flex; align-items: center; justify-content: space-between; padding: 0 24px 0 0; }
.pill-text { color: #6d7375; font: 26px/1 "Open Sans", sans-serif; }
.pill-dots { display: flex; flex-direction: column; gap: 3px; }
.front-body { flex: 1; position: relative; }
.front-scroll { position: absolute; right: 0; top: 347px; width: 24px; height: 244px; background: #c6c6c6; border-radius: 2px 0 0 2px; }
.front-foot { height: 112px; flex: none; position: relative; background: linear-gradient(90deg, #1c444b 60%, #1c444b 85%, #255a62 94%); border-top: 2px solid #4a7c85; }
.ghost { position: absolute; right: 73px; top: 21px; width: 240px; height: 63px; border: 2px solid #c4d2d4; border-radius: 8px; color: #6f7a7c; font: 700 26px/60px "Open Sans", sans-serif; text-align: right; padding-right: 32px; }
.close-x { position: absolute; right: 28px; top: 44px; width: 18px; height: 18px; }

/* safari window */
.safari { left: 0; top: 50px; width: 2630px; height: 1640px; background: #fff; border-radius: 20px; color: #333; }
.toolbar { position: relative; height: 104px; background: #f6f3f9; border-bottom: 2px solid #dcd9dd; }
.lights { position: absolute; left: 40px; top: 40px; display: flex; gap: 16px; }
.lights i { width: 24px; height: 24px; border-radius: 50%; display: block; }
.red { background: #ec6a5e; }
.yellow { background: #f5bf4f; }
.green { background: #61c554; }
.tb { position: absolute; }
.sidebar { left: 196px; top: 36px; width: 38px; height: 30px; }
.tb-sep { position: absolute; left: 249px; top: 34px; width: 1px; height: 36px; background: #e0dde2; }
.caret { left: 261px; top: 47px; width: 14px; height: 9px; }
.back { left: 326px; top: 37px; width: 18px; height: 28px; }
.forward { left: 399px; top: 37px; width: 18px; height: 28px; }
.shield { left: 722px; top: 35px; width: 29px; height: 33px; }
.urlbar { position: absolute; left: 783px; top: 24px; width: 1063px; height: 55px; border: 2px solid #dedbe0; border-radius: 13px; text-align: center; }
.url { display: block; width: 1063px; margin-left: -1px; font: 26px/56px "Liberation Sans", sans-serif; letter-spacing: -1.100px; color: #3b3a3e; }
.translate { position: absolute; left: 975px; top: 12px; width: 37px; height: 27px; }
.tr-a { font: 13px "Liberation Sans", sans-serif; fill: #77747a; }
.tr-x { font: 700 14px "Liberation Sans", sans-serif; fill: #fff; }
.reload { position: absolute; left: 1026px; top: 13px; width: 22px; height: 25px; }
.share { left: 2414px; top: 30px; width: 30px; height: 38px; }
.plus { left: 2488px; top: 37px; width: 27px; height: 27px; }
.grid { left: 2561px; top: 36px; width: 30px; height: 30px; }

.tabs { display: flex; height: 56px; background: #e9e6eb; }
.tab { flex: 0 0 878px; display: flex; align-items: center; justify-content: center; gap: 18px; padding-left: 8px; color: #6b6870; font: 24px/30px "Liberation Sans", sans-serif; border-right: 2px solid #d8d5da; }
.tab:nth-child(1) { flex-basis: 876px; }
.tab span { position: relative; top: 1px; }
.tab.current { flex: 1 1 auto; background: #f6f3f9; color: #3d3b40; border-right: 0; }
.bird { width: 16px; height: 32px; flex: none; }

.navbar { height: 104px; background: #70a24d; border: 2px solid #000; border-width: 3px 2px; }
.nav-inner { display: flex; width: 2340px; margin: 0 auto; height: 98px; align-items: stretch; font-size: 28px; line-height: 100px; }
.brand { font-size: 36px; color: #fff; padding: 0 30px 0 30px; line-height: 98px; }
.nav-link { display: flex; align-items: center; gap: 10px; padding: 2px 30px 0; color: #e1ecd6; white-space: nowrap; }
.nav-link.active { background: #4d6637; color: #fff; }
.nav-caret { width: 0; height: 0; border: 8px solid transparent; border-top-color: #e1ecd6; border-bottom: 0; }

.container { width: 2340px; margin: 0 auto; padding: 0 30px; }
.page-header { margin: 0 0 40px; padding-bottom: 18px; border-bottom: 2px solid #eee; }
.page-header.first { margin-top: 120px; }
h1 { margin: 0 0 20px; padding-top: 40px; font-size: 72px; font-weight: 500; line-height: 79px; color: #333; }
.first h1 { padding-top: 0; margin-top: 0; }
small { font-size: 46.800px; font-weight: 400; color: #777; margin-left: 1px; letter-spacing: -.45px; line-height: 1; }
.table { width: 100%; border-collapse: collapse; border: 2px solid #ddd; font-size: 28px; line-height: 40px; table-layout: fixed; margin: 0; }
.t1 { margin-bottom: 38px; }
.table th, .table td { padding: 16px; border: 2px solid #ddd; text-align: left; color: #333; }
.table th { font-weight: 700; }
.table tr:nth-child(odd) { background: #f9f9f9; }
.t1 th { width: 447px; }
.t2 th { width: 1321px; }
p { margin: 0 0 20px; font-size: 28px; line-height: 40px; color: #333; }
.dock-shade { position: absolute; left: 0; right: 0; bottom: 0; height: 65px; background: linear-gradient(180deg, rgba(0, 0, 0, 0), rgba(0, 0, 0, .12)); pointer-events: none; }

/* dock */
.dock { position: absolute; left: 502px; top: 1694px; width: 1875px; height: 95px; border-radius: 30px; display: flex; gap: 18px; padding: 15px 0 0 15px; background: linear-gradient(90deg, #625d9b 0, #6a5fa5 680px, #a9a9c2 790px, #a8b0b9 1000px, #b0b6bd 1875px); box-shadow: inset 0 0 0 2px rgba(255, 255, 255, .12); }
.app { position: relative; flex: none; width: 60px; height: 60px; }
.app > svg { position: absolute; left: 0; top: 0; width: 100%; height: 100%; overflow: visible; }
.app.dot::after { content: ""; position: absolute; left: 26px; top: 69px; width: 8px; height: 8px; border-radius: 50%; background: #121040; }
.dock-sep ~ .app.dot::after { background: #3c3f48; }
.dock-sep { flex: none; width: 2px; height: 72px; margin: -3px 7px 0 8px; background: #7f7f8c; }
.sep2 { margin-left: 6px; margin-right: 6px; }
.q-app { margin-left: 3px; }
.wide { width: 63px; margin-top: -1px; margin-right: -3px; }
.wide.dot::after { left: 27px; }
.tall { width: 70px; height: 72px; margin: -6px -5px 0 -5px; }
.tall.dot::after { left: 31px; top: 75px; }
.app svg[viewBox="0 0 60 72"] { top: -7px; height: 72px; }
.app svg[viewBox="0 0 60 66"] { height: 66px; }
.after { width: 65px; margin: -2px -4px 0 -1px; height: 67px; }
.qm { width: 40px; margin: 3px 10px 0 9px; height: 62px; }
.docs { width: 62px; margin: -17px 0 0 -2px; height: 70px; top: 0; }
.docs svg { height: 70px; }
.trash { width: 54px; height: 66px; margin: 0 0 0 3px; }
.badge { position: absolute; background: #e84c40; color: #fff; border-radius: 50%; font: 20px/1 "Liberation Sans", sans-serif; display: flex; align-items: center; justify-content: center; }
.b-mail { left: 32px; top: -7px; width: 35px; height: 28px; }
.b-cal { left: 41px; top: -7px; width: 28px; height: 28px; }
.b-set { left: 41px; top: -7px; width: 28px; height: 28px; }
.cal { background: #f8f7f4; border-radius: 13px; }
.cal-top { height: 17px; border-radius: 13px 13px 0 0; background: #ec5f52; color: #fff; font: 700 14px/17px "Liberation Sans", sans-serif; padding-left: 16px; }
.cal-day { font: 300 38px/42px Inter, "Liberation Sans", sans-serif; color: #222; text-align: center; }
.doc-t { font: 12px "Liberation Sans", sans-serif; fill: #c0383c; }
```
